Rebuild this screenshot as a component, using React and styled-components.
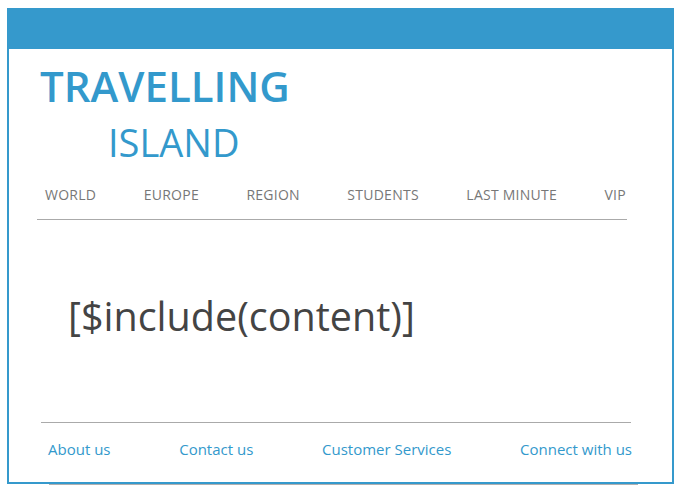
import React from "react";
import styled, { createGlobalStyle } from "styled-components";

const Global = createGlobalStyle`
  html, body { margin: 0; padding: 0; background: #fff; }
  body { font-family: "Open Sans", "DejaVu Sans", sans-serif; }
  * { box-sizing: border-box; }
`;

const Page = styled.div`
  padding: 8px 5px 0 7px;
`;

const Frame = styled.div`
  width: 667px;
  height: 476px;
  border: 2px solid #3599cc;
  display: flex;
  flex-direction: column;
  background: #fff;
`;

const TopBar = styled.div`
  height: 39px;
  background: #3599cc;
  flex: none;
`;

const Logo = styled.div`
  display: flex;
  flex-direction: column;
  padding: 15px 0 0 31px;
`;

const LogoMain = styled.div`
  font-size: 42px;
  font-weight: 600;
  line-height: 44px;
  color: #3399cc;
`;

const LogoSub = styled.div`
  font-size: 38px;
  font-weight: 400;
  line-height: 44px;
  color: #3399cc;
  margin: 12px 0 0 68px;
`;

const Nav = styled.nav`
  margin: 22px 0 0 28px;
  width: 590px;
  border-bottom: 1px solid #aaaaaa;
  display: flex;
  justify-content: space-between;
  padding: 0 1px 15px 8px;
`;

const NavItem = styled.a`
  font-size: 14px;
  line-height: 18px;
  letter-spacing: 0.25px;
  color: #777777;
  text-transform: uppercase;
  text-decoration: none;
`;

const Content = styled.main`
  flex: 1;
  padding: 72px 0 0 59px;
  font-size: 39.5px;
  line-height: 48px;
  color: #444444;
`;

const Footer = styled.footer`
  margin: 0 0 0 32px;
  width: 590px;
  border-top: 1px solid #aaaaaa;
  display: flex;
  justify-content: space-between;
  padding: 15px 0 22px 7px;
`;

const FootLink = styled.a`
  font-size: 15px;
  line-height: 22px;
  color: #3399cc;
  text-decoration: none;
  white-space: nowrap;
  &:last-child { margin-right: -1px; }
`;

const Shadow = styled.div`
  margin-left: 42px;
  width: 589px;
  height: 1px;
  background: #b0b0b0;
`;

const navItems = ["World", "Europe", "Region", "Students", "Last minute", "VIP"];
const footLinks = ["About us", "Contact us", "Customer Services", "Connect with us"];

export default function App() {
  return (
    <>
      <Global />
      <Page>
        <Frame>
          <TopBar />
          <Logo>
            <LogoMain>TRAVELLING</LogoMain>
            <LogoSub>ISLAND</LogoSub>
          </Logo>
          <Nav>
            {navItems.map((n) => (
              <NavItem key={n} href="#">{n}</NavItem>
            ))}
          </Nav>
          <Content>[$include(content)]</Content>
          <Footer>
            {footLinks.map((f) => (
              <FootLink key={f} href="#">{f}</FootLink>
            ))}
          </Footer>
        </Frame>
        <Shadow />
      </Page>
    </>
  );
}
